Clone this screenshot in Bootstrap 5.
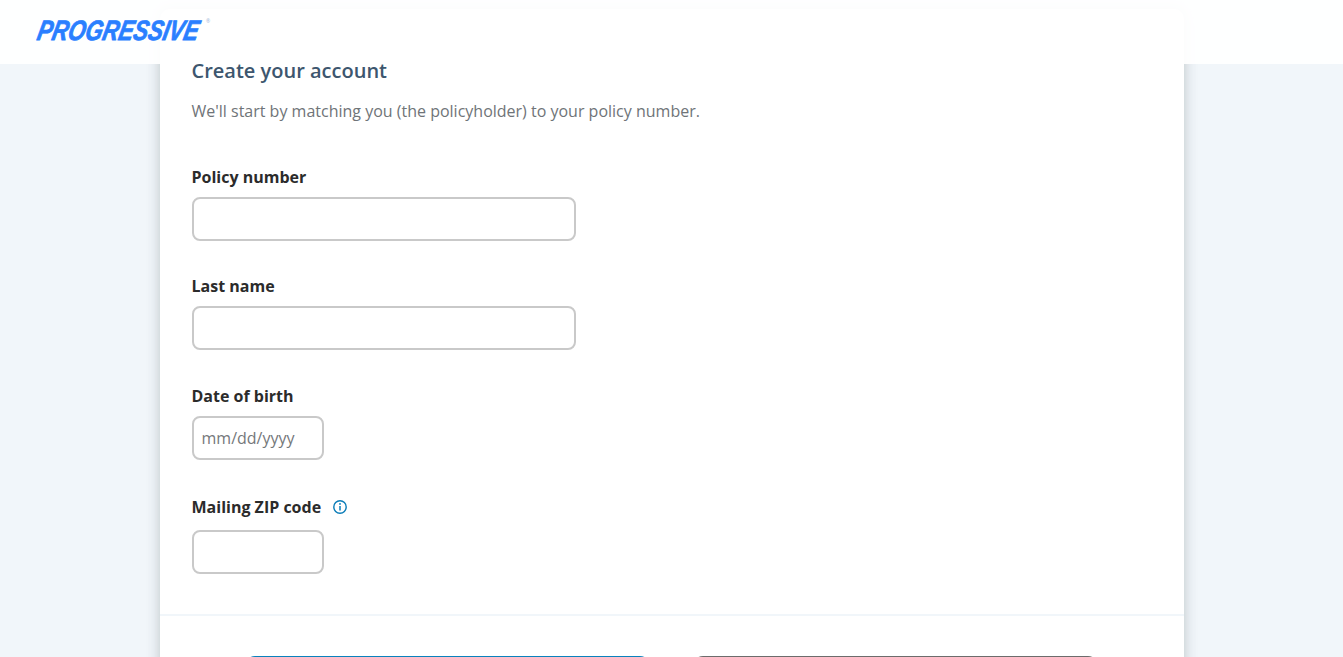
<!DOCTYPE html>
<html lang="en">
<head>
<meta charset="utf-8">
<title>Create your account</title>
<link href="https://cdn.jsdelivr.net/npm/bootstrap@5.3.0/dist/css/bootstrap.min.css" rel="stylesheet">
<style>
html, body { height: 100%; overflow: hidden; }
body { background: #f1f6fa; font-family: "Open Sans", "Liberation Sans", sans-serif; font-size: 16px; color: #2b2b2b; }
.site-head { position: absolute; top: 0; left: 0; right: 0; height: 64px; background: rgba(255,255,255,.93); z-index: 5; padding-left: 38px; }
.brand-word { font-family: "Liberation Sans", sans-serif; font-weight: 700; font-style: italic; font-size: 28px; line-height: 1; color: #2a7fff; display: inline-block; width: 168px; white-space: nowrap; transform: skewX(-12deg) scaleX(.79); transform-origin: left center; -webkit-text-stroke: .8px #2a7fff; margin-top: -3px; }
.brand-reg { font-size: 5px; color: #9db7d8; align-self: flex-start; margin-left: 0; margin-top: 18px; }
.main-panel { width: 1024px; margin: 9px auto 0; background: #fff; border-radius: 10px 10px 0 0; box-shadow: 0 0 14px rgba(50,60,70,.28); }
.panel-body { padding: 49px 32px 0; height: 607px; border-bottom: 2px solid #f1f6fa; }
.panel-title { font-size: 20px; font-weight: 600; line-height: 26px; color: #3d566e; margin: 0 0 15px; }
.panel-intro { color: #6f7478; line-height: 24px; margin: 0 0 42px; }
.field-name { display: block; font-weight: 700; line-height: 24px; margin-bottom: 8px; font-size: 16px; color: #2b2b2b; }
.field-name-tall { margin-bottom: 11px; }
.text-box { height: 44px; border: 2px solid #c9c9c9; border-radius: 8px; padding: 0 8px; font-size: 16px; color: #333; box-shadow: none; }
.text-box::placeholder { color: #75787b; opacity: 1; }
.box-wide { width: 384px; }
.box-short { width: 132px; }
.field-group { margin-bottom: 33px; }
.group-mid { margin-bottom: 34px; }
.group-dob { margin-bottom: 35px; }
.foot-actions { padding: 40px 85px 0; gap: 43px; }
.act-btn { width: 405px; height: 48px; border-radius: 10px; border: 0; color: #fff; font-weight: 600; }
.act-primary { background: #0a82bd; }
.act-second { background: #6c6c6c; }
</style>
</head>
<body>
<header class="site-head d-flex align-items-center">
  <span class="brand-word">PROGRESSIVE</span><span class="brand-reg">®</span>
</header>
<main class="main-panel">
  <div class="panel-body">
    <h1 class="panel-title">Create your account</h1>
    <p class="panel-intro">We'll start by matching you (the policyholder) to your policy number.</p>
    <div class="field-group">
      <label class="field-name" for="policy">Policy number</label>
      <input class="form-control text-box box-wide" id="policy" type="text">
    </div>
    <div class="field-group group-mid">
      <label class="field-name" for="lname">Last name</label>
      <input class="form-control text-box box-wide" id="lname" type="text">
    </div>
    <div class="field-group group-dob">
      <label class="field-name" for="dob">Date of birth</label>
      <input class="form-control text-box box-short" id="dob" type="text" placeholder="mm/dd/yyyy">
    </div>
    <div class="field-group">
      <label class="field-name field-name-tall d-flex align-items-center gap-2" for="zip">Mailing ZIP code
        <svg class="ms-1" width="14" height="14" viewBox="0 0 14 14" fill="none" stroke="#0a7cb8" aria-hidden="true">
          <circle cx="7" cy="7" r="6.2" stroke-width="1.4"/>
          <path d="M7 6V10.5" stroke-width="1.5"/>
          <circle cx="7" cy="3.9" r=".95" fill="#0a7cb8" stroke="none"/>
        </svg>
      </label>
      <input class="form-control text-box box-short" id="zip" type="text">
    </div>
  </div>
  <div class="foot-actions d-flex">
    <button class="act-btn act-primary" type="button" aria-label="Continue"></button>
    <button class="act-btn act-second" type="button" aria-label="Cancel"></button>
  </div>
</main>
<script src="https://cdn.jsdelivr.net/npm/bootstrap@5.3.0/dist/js/bootstrap.bundle.min.js"></script>
</body>
</html>
